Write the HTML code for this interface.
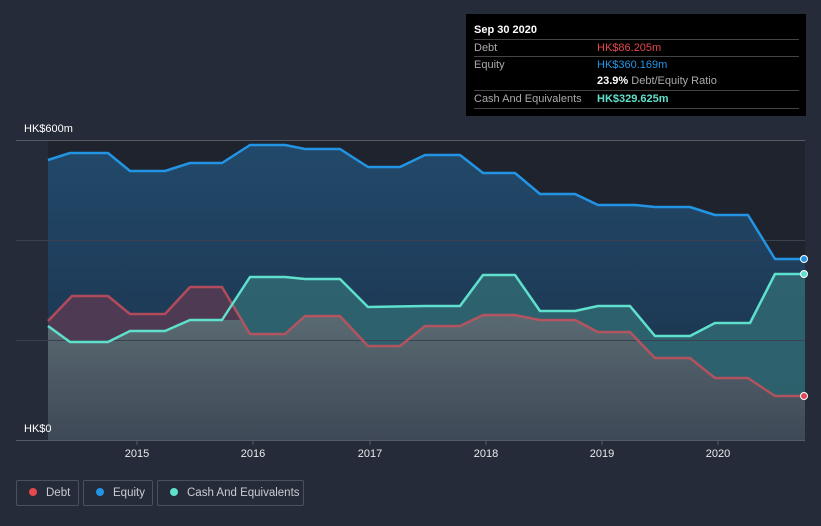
<!DOCTYPE html>
<html><head><meta charset="utf-8"><style>
body{margin:0;width:821px;height:526px;background:#252b38;font-family:"Liberation Sans",sans-serif;overflow:hidden;position:relative}
.t{position:absolute;left:466px;top:14px;width:340px;height:102px;background:#000;color:#fff;font-size:11px}
.r{position:absolute;left:8px;width:325px;border-top:1px solid #444;height:17px;line-height:17px}
.lg{position:absolute;top:480px;height:26px;border:1px solid #4a515c;border-radius:2px;color:#c8ccd2;font-size:11.5px;line-height:24px;box-sizing:border-box;white-space:nowrap}
.lg i{display:inline-block;width:8px;height:8px;border-radius:50%;margin:0 9px 0 12px}
</style></head><body>
<svg width="821" height="526" style="position:absolute;left:0;top:0">
<defs>
<linearGradient id="ge" x1="0" y1="0" x2="0" y2="1"><stop offset="0" stop-color="#22496a"/><stop offset="1" stop-color="#1a3048"/></linearGradient>
<linearGradient id="gg" x1="0" y1="0" x2="0" y2="1"><stop offset="0" stop-color="#5a6a72"/><stop offset="1" stop-color="#3e4856"/></linearGradient>
</defs>
<rect x="48" y="140" width="757" height="300" fill="#1e232d"/>
<polygon fill="url(#ge)" points="48,160 70,153 108,153 130,171 165,171 190,163 222,163 250,145 285,145 305,149 340,149 368,167 400,167 425,155 460,155 483,173 515,173 540,194 575,194 598,205 635,205 655,207 690,207 715,215 748,215 775,259 805,259 805,440 48,440"/>
<polygon fill="#2f6670" opacity="0.9" points="48,326 70,342 108,342 130,331 165,331 190,320 222,320 250,277 285,277 305,279 340,279 368,307 425,306 460,306 483,275 515,275 540,311 575,311 598,306 630,306 655,336 690,336 715,323 750,323 775,274 805,274 805,440 48,440"/>
<polygon fill="#4e3a52" points="48,321 72,296 108,296 130,314 165,314 190,287 222,287 240,320 222,320 190,320 165,331 130,331 108,342 70,342 48,326"/>
<polygon fill="url(#gg)" points="48,326 70,342 108,342 130,331 165,331 190,320 222,320 240,320 250,334 285,334 305,316 340,316 368,346 400,346 425,326 460,326 483,315 515,315 540,320 575,320 598,332 630,332 655,358 690,358 715,378 748,378 775,396 805,396 805,440 48,440"/>
<g stroke="#3a4250" stroke-width="1"><line x1="16" y1="140.5" x2="805" y2="140.5" stroke="#555c66"/><line x1="16" y1="240.5" x2="805" y2="240.5"/><line x1="16" y1="340.5" x2="805" y2="340.5"/><line x1="16" y1="440.5" x2="805" y2="440.5" stroke="#555c66"/></g>
<g fill="none" stroke-width="2.5" stroke-linejoin="round">
<polyline stroke="#d0505c" opacity="0.8" points="48,321 72,296 108,296 130,314 165,314 190,287 222,287 250,334 285,334 305,316 340,316 368,346 400,346 425,326 460,326 483,315 515,315 540,320 575,320 598,332 630,332 655,358 690,358 715,378 748,378 775,396 805,396"/>
<polyline stroke="#5fe0cc" points="48,326 70,342 108,342 130,331 165,331 190,320 222,320 250,277 285,277 305,279 340,279 368,307 425,306 460,306 483,275 515,275 540,311 575,311 598,306 630,306 655,336 690,336 715,323 750,323 775,274 805,274"/>
<polyline stroke="#2394e4" points="48,160 70,153 108,153 130,171 165,171 190,163 222,163 250,145 285,145 305,149 340,149 368,167 400,167 425,155 460,155 483,173 515,173 540,194 575,194 598,205 635,205 655,207 690,207 715,215 748,215 775,259 805,259"/>
</g>
<circle cx="804" cy="259" r="3.5" fill="#2394e4" stroke="#fff" stroke-width="1"/>
<circle cx="804" cy="274" r="3.5" fill="#5fe0cc" stroke="#fff" stroke-width="1"/>
<circle cx="804" cy="396" r="3.5" fill="#e04a55" stroke="#fff" stroke-width="1"/>
<g stroke="#555c66"><line x1="137" y1="440" x2="137" y2="445"/><line x1="253" y1="440" x2="253" y2="445"/><line x1="370" y1="440" x2="370" y2="445"/><line x1="486" y1="440" x2="486" y2="445"/><line x1="602" y1="440" x2="602" y2="445"/><line x1="718" y1="440" x2="718" y2="445"/></g>
<g fill="#e8eaee" font-size="11" font-family="Liberation Sans,sans-serif" text-anchor="middle">
<text x="137" y="457">2015</text><text x="253" y="457">2016</text><text x="370" y="457">2017</text><text x="486" y="457">2018</text><text x="602" y="457">2019</text><text x="718" y="457">2020</text>
</g>
<g fill="#fff" font-size="11" font-family="Liberation Sans,sans-serif"><text x="24" y="132">HK$600m</text><text x="24" y="432">HK$0</text></g>
</svg>
<div class="t">
<div style="position:absolute;left:8px;top:10px;font-weight:bold">Sep 30 2020</div>
<div class="r" style="top:25px"><span style="color:#aaa">Debt</span><span style="position:absolute;left:123px;color:#e5484d">HK$86.205m</span></div>
<div class="r" style="top:42px"><span style="color:#aaa">Equity</span><span style="position:absolute;left:123px;color:#2394e4">HK$360.169m</span></div>
<div style="position:absolute;left:131px;top:59px;height:17px;line-height:17px"><b>23.9%</b> <span style="color:#aaa">Debt/Equity Ratio</span></div>
<div class="r" style="top:76px;border-bottom:1px solid #444"><span style="color:#aaa">Cash And Equivalents</span><span style="position:absolute;left:123px;color:#5fe0cc;font-weight:bold">HK$329.625m</span></div>
</div>
<div class="lg" style="left:16px;width:63px"><i style="background:#e5484d"></i>Debt</div>
<div class="lg" style="left:83px;width:70px"><i style="background:#2394e4"></i>Equity</div>
<div class="lg" style="left:157px;width:147px"><i style="background:#5fe0cc"></i>Cash And Equivalents</div>
</body></html>
